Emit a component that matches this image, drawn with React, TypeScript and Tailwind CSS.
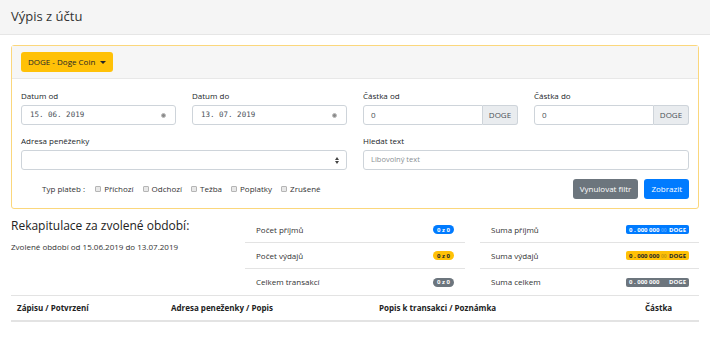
const font = { fontFamily: '"Open Sans", "Noto Sans", sans-serif' };

function Label({ children }: { children: React.ReactNode }) {
  return <div className="text-[8px] leading-[12px] text-[#212529] mb-[3px]">{children}</div>;
}

function DateField({ value }: { value: string }) {
  return (
    <div className="h-[20px] border border-[#ced4da] rounded-[3px] bg-white flex items-center justify-between pl-[8px] pr-[9px]">
      <span className="text-[7.5px] text-[#495057]" style={{ fontFamily: '"DejaVu Sans Mono", monospace' }}>{value}</span>
      <span className="w-[5px] h-[5px] rounded-full bg-[#8a8a8a] border border-[#bbb]" />
    </div>
  );
}

function AmountField() {
  return (
    <div className="h-[20px] flex">
      <div className="flex-1 border border-[#ced4da] rounded-l-[3px] bg-white flex items-center pl-[7px] text-[8px] text-[#495057]">0</div>
      <div className="w-[35px] border border-l-0 border-[#ced4da] rounded-r-[3px] bg-[#e9ecef] flex items-center justify-center text-[8px] text-[#495057]">DOGE</div>
    </div>
  );
}

function Check({ label }: { label: string }) {
  return (
    <span className="flex items-center gap-[3px] mr-[9px]">
      <span className="w-[6px] h-[6px] border border-[#b5b5b5] bg-[#e8e8e8] rounded-[1px]" />
      <span>{label}</span>
    </span>
  );
}

function Pill({ tone, children }: { tone: 'blue' | 'yellow' | 'gray'; children: React.ReactNode }) {
  const cls = tone === 'blue' ? 'bg-[#007bff] text-white' : tone === 'yellow' ? 'bg-[#ffc107] text-[#212529]' : 'bg-[#6c757d] text-white';
  return <span className={`${cls} rounded-full px-[4px] h-[9px] flex items-center text-[6px] font-bold leading-none`}>{children}</span>;
}

function Amount({ tone }: { tone: 'blue' | 'yellow' | 'gray' }) {
  const cls = tone === 'blue' ? 'bg-[#007bff] text-white' : tone === 'yellow' ? 'bg-[#ffc107] text-[#212529]' : 'bg-[#6c757d] text-white';
  const faint = tone === 'blue' ? 'text-[#4da3ff]' : tone === 'yellow' ? 'text-[#c79a10]' : 'text-[#6c757d]';
  return (
    <span className={`${cls} rounded-[2px] w-[63px] h-[9px] flex items-center justify-between px-[3px] text-[6px] font-bold leading-none`}>
      <span>0 . 000 000 <span className={`${faint} text-[5px]`}>00</span></span>
      <span>DOGE</span>
    </span>
  );
}

export default function App() {
  const left = [
    ['Počet příjmů', 'blue'],
    ['Počet výdajů', 'yellow'],
    ['Celkem transakcí', 'gray'],
  ] as const;
  const right = [
    ['Suma příjmů', 'blue'],
    ['Suma výdajů', 'yellow'],
    ['Suma celkem', 'gray'],
  ] as const;

  return (
    <div className="w-[710px] h-[338px] bg-white overflow-hidden text-[#212529]" style={font}>
      <div className="h-[35px] bg-[#f5f5f5] border-b border-[#e6e6e6] flex items-center px-[11px]">
        <h1 className="text-[13px] text-[#333] -mt-[1px]">Výpis z účtu</h1>
      </div>

      <div className="mx-[11px] mt-[10px] border border-[#fbd77c] rounded-[3px]">
        <div className="h-[33px] bg-[#f6f6f6] border-b border-[#e8e8e8] flex items-center px-[9px]">
          <button className="h-[20px] px-[7px] bg-[#ffc107] rounded-[3px] text-[8px] text-[#212529] flex items-center gap-[5px]">
            DOGE - Doge Coin
            <span className="w-0 h-0 border-l-[3px] border-r-[3px] border-t-[3px] border-l-transparent border-r-transparent border-t-[#212529]" />
          </button>
        </div>
        <div className="px-[9px] pt-[11px] pb-[9px]">
          <div className="grid grid-cols-4 gap-x-[16px]">
            <div>
              <Label>Datum od</Label>
              <DateField value="15. 06. 2019" />
            </div>
            <div>
              <Label>Datum do</Label>
              <DateField value="13. 07. 2019" />
            </div>
            <div>
              <Label>Částka od</Label>
              <AmountField />
            </div>
            <div>
              <Label>Částka do</Label>
              <AmountField />
            </div>
            <div className="col-span-2 mt-[10px]">
              <Label>Adresa peněženky</Label>
              <div className="h-[20px] border border-[#ced4da] rounded-[3px] bg-white flex items-center justify-end pr-[7px]">
                <span className="flex flex-col gap-[1px]">
                  <span className="w-0 h-0 border-l-[2px] border-r-[2px] border-b-[3px] border-l-transparent border-r-transparent border-b-[#444]" />
                  <span className="w-0 h-0 border-l-[2px] border-r-[2px] border-t-[3px] border-l-transparent border-r-transparent border-t-[#444]" />
                </span>
              </div>
            </div>
            <div className="col-span-2 mt-[10px]">
              <Label>Hledat text</Label>
              <div className="h-[20px] border border-[#ced4da] rounded-[3px] bg-white flex items-center pl-[7px] text-[7.5px] text-[#8a8f94]">Libovolný text</div>
            </div>
          </div>
          <div className="flex items-center justify-between mt-[9px]">
            <div className="flex items-center text-[8px] text-[#333] pl-[21px]">
              <span className="mr-[10px]">Typ plateb :</span>
              <Check label="Příchozí" />
              <Check label="Odchozí" />
              <Check label="Težba" />
              <Check label="Poplatky" />
              <Check label="Zrušené" />
            </div>
            <div className="flex gap-[6px]">
              <button className="h-[20px] px-[7px] bg-[#6c757d] text-white text-[8px] rounded-[3px]">Vynulovat filtr</button>
              <button className="h-[20px] px-[7px] bg-[#007bff] text-white text-[8px] rounded-[3px]">Zobrazit</button>
            </div>
          </div>
        </div>
      </div>

      <div className="flex mx-[11px] mt-[8px]">
        <div className="w-[234px]">
          <div className="text-[12px] leading-[18px] text-[#222]">Rekapitulace za zvolené období:</div>
          <div className="text-[8px] leading-[12px] mt-[6px] text-[#333]">Zvolené období od 15.06.2019 do 13.07.2019</div>
        </div>
        <div className="w-[220px]">
          {left.map(([t, tone], i) => (
            <div key={t} className={`h-[26px] flex items-center justify-between pl-[11px] pr-[11px] text-[8px] text-[#333] ${i < 2 ? 'border-b border-[#e3e3e3]' : ''}`}>
              <span>{t}</span>
              <Pill tone={tone}>0 z 0</Pill>
            </div>
          ))}
        </div>
        <div className="w-[234px] pl-[15px]">
          {right.map(([t, tone], i) => (
            <div key={t} className={`h-[26px] flex items-center justify-between pl-[11px] pr-[10px] text-[8px] text-[#333] ${i < 2 ? 'border-b border-[#e3e3e3]' : ''}`}>
              <span>{t}</span>
              <Amount tone={tone} />
            </div>
          ))}
        </div>
      </div>

      <div className="mx-[11px] border-t border-[#e3e3e3] border-b-2 border-b-[#e3e3e3] h-[27px] grid grid-cols-[154px_208px_272px_54px] items-center text-[8px] font-bold text-[#222]">
        <div className="pl-[6px]">Zápisu / Potvrzení</div>
        <div className="pl-[6px]">Adresa peneženky / Popis</div>
        <div className="pl-[6px]">Popis k transakci / Poznámka</div>
        <div>Částka</div>
      </div>
    </div>
  );
}
